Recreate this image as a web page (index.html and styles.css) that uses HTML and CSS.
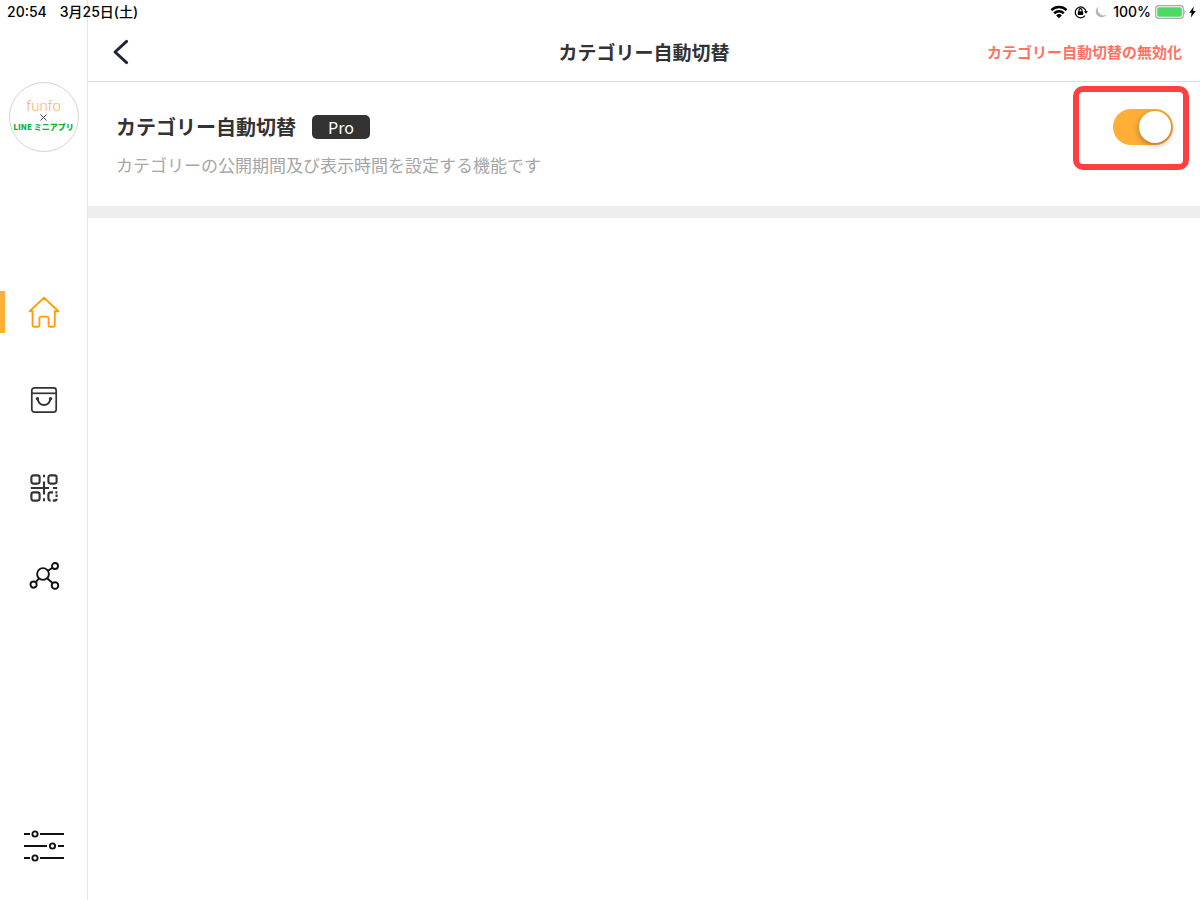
FILE: index.html
```html
<!DOCTYPE html>
<html lang="ja">
  <head>
    <meta charset="UTF-8" />
    <meta name="viewport" content="width=device-width, initial-scale=1.0" />
    <title>カテゴリー自動切替</title>
    <link rel="stylesheet" href="styles.css">
  </head>
  <body>
    <div class="status">
      <span class="time">20:54</span>
      <span class="date">3月25日(土)</span>
      <div class="status-right">
        <svg class="wifi" width="18" height="14" viewBox="0 0 18 14" fill="none" stroke="#000" stroke-width="2.4">
          <path d="M1.4 5.2a10.8 10.8 0 0 1 15.2 0" />
          <path d="M4.2 8.3a6.8 6.8 0 0 1 9.6 0" />
          <path d="M9 13.2 6.2 10.4a4 4 0 0 1 5.6 0z" fill="#000" stroke="none" />
        </svg>
        <svg class="lock" width="14" height="14" viewBox="0 0 14 14" fill="none" stroke="#000" stroke-width="1.2">
          <path d="M11 10.6a5.4 5.4 0 1 1 1-4" />
          <path d="M10 6.2h4l-2 2.6z" fill="#000" stroke="none" />
          <rect x="3.8" y="6.2" width="5.4" height="3.8" rx="0.5" fill="#000" stroke="none" />
          <path d="M5 6.5V5.2a1.5 1.5 0 0 1 3 0v1.3" />
        </svg>
        <svg class="moon" width="12" height="12" viewBox="0 0 12 12">
          <path d="M3.6 0.4A5.9 5.9 0 1 0 11.6 8.6 6 6 0 0 1 3.6 0.4z" fill="#b5b5b5" />
        </svg>
        <span>100%</span>
        <svg class="battery" width="31" height="14" viewBox="0 0 31 14">
          <rect x="0.7" y="0.7" width="27.6" height="12.6" rx="3.4" fill="#fff" stroke="#a8a8a8" stroke-width="1.2" />
          <rect x="2.2" y="2.2" width="24.6" height="9.6" rx="1.8" fill="#4cd964" />
          <path d="M29.3 5v4q1.3-.6 1.3-2t-1.3-2z" fill="#a8a8a8" />
        </svg>
        <svg class="bolt" width="7" height="12" viewBox="0 0 7 12">
          <path d="M4.8 0.6 0.2 6.8h2.4l-.7 4.8 4.9-6.6H4.1z" fill="#000" />
        </svg>
      </div>
    </div>

    <div class="app">
      <nav class="sidebar">
        <a class="logo" href="#" aria-label="funfo × LINE ミニアプリ">
          <span class="logo-funfo">funfo</span>
          <svg width="7" height="7" viewBox="0 0 7 7" stroke="#444" stroke-width="1"><path d="M0.5 0.5l6 6M6.5 0.5l-6 6" /></svg>
          <span class="logo-line">LINE ミニアプリ</span>
        </a>

        <div class="menu">
          <a class="item active" href="#" aria-label="ホーム">
            <svg width="32" height="32" viewBox="0 0 32 32" fill="none" stroke="#ff9f0f" stroke-width="1.9" stroke-linejoin="round" stroke-linecap="round">
              <path d="M16 1.8 1.6 15.2H4.6V29.6q0 1.2 1.2 1.2H10.2q1.2 0 1.2-1.2V22.4q0-1.8 1.8-1.8H18.8q1.8 0 1.8 1.8V29.6q0 1.2 1.2 1.2H25.6q1.2 0 1.2-1.2V15.2H30.4z" />
            </svg>
          </a>
          <a class="item" href="#" aria-label="注文">
            <svg width="28" height="28" viewBox="0 0 28 28" fill="none" stroke="#333" stroke-width="1.7">
              <rect x="1.8" y="1.8" width="24.4" height="24.4" rx="2.6" />
              <path d="M2 7.3H26" />
              <path d="M7.6 13q1.2 6 6.4 6t6.4-6" stroke-width="1.9" />
              <circle cx="7.5" cy="12.8" r="1.7" fill="#333" stroke="none" />
              <circle cx="20.5" cy="12.8" r="1.7" fill="#333" stroke="none" />
            </svg>
          </a>
          <a class="item" href="#" aria-label="QRコード">
            <svg width="28" height="28" viewBox="0 0 28 28" fill="none" stroke="#333" stroke-width="2.1">
              <rect x="1.4" y="1.4" width="8.2" height="8.2" rx="2" />
              <rect x="18.4" y="1.4" width="8.2" height="8.2" rx="2" />
              <rect x="1.4" y="18.4" width="8.2" height="8.2" rx="2" />
              <path d="M14 .8V3.2M14 7.4V20.4M14 24.2V27.2M.8 14H19M23 14H27.2" />
              <path d="M23 18.4H20.8q-2.4 0-2.4 2.4V24.2q0 2.4 2.2 2.4M25.4 18.4H27.4M26.6 20.6V23M22.8 26.6H24.4q2.2 0 2.2-1.8" />
            </svg>
          </a>
          <a class="item" href="#" aria-label="連携">
            <svg width="32" height="32" viewBox="0 0 32 32" fill="none" stroke="#111" stroke-width="1.9">
              <circle cx="15" cy="14" r="5.9" />
              <circle cx="27" cy="6" r="3" />
              <circle cx="5.6" cy="24.6" r="3.1" />
              <circle cx="27" cy="25.6" r="3.3" />
              <path d="M19.9 10.7 24.5 7.7M11 18.4 7.7 22.2M19.2 18.2 24.7 23.3" />
            </svg>
          </a>
        </div>

        <a class="item settings" href="#" aria-label="設定">
          <svg width="40" height="32" viewBox="0 0 40 32" fill="none" stroke="#111" stroke-width="1.9">
            <path d="M0 4H6M16 4H40M0 16H23M34 16H40M0 28H6M16 28H40" />
            <circle cx="11" cy="4" r="2.6" />
            <circle cx="28.5" cy="16" r="2.6" />
            <circle cx="11" cy="28" r="2.6" />
          </svg>
        </a>
      </nav>

      <main class="content">
        <header class="topbar">
          <button class="back" type="button" aria-label="戻る">
            <svg width="18" height="26" viewBox="0 0 18 26" fill="none" stroke="#25253a" stroke-width="3" stroke-linecap="round" stroke-linejoin="round"><path d="M14.6 2.4 3 13 14.6 23.6" /></svg>
          </button>
          <h1 class="title">カテゴリー自動切替</h1>
          <button class="disable" type="button">カテゴリー自動切替の無効化</button>
        </header>

        <section class="setting">
          <div class="setting-text">
            <h2 class="setting-name">
              <label for="auto">カテゴリー自動切替</label>
              <span class="badge">Pro</span>
            </h2>
            <p class="desc">カテゴリーの公開期間及び表示時間を設定する機能です</p>
          </div>
          <div class="highlight">
            <input class="switch" id="auto" type="checkbox" role="switch" checked>
          </div>
        </section>
      </main>
    </div>
  </body>
</html>
```
FILE: styles.css
```css
* {
  margin: 0;
  padding: 0;
  box-sizing: border-box;
}
body {
  background-color: #fff;
  color: #333;
  font-family: "Noto Sans CJK JP", sans-serif;
}
a {
  text-decoration: none;
}
button {
  border: none;
  background: none;
  font-family: inherit;
  cursor: pointer;
}
svg {
  display: block;
  flex: none;
}

/* status bar, lies over the sidebar and the header */
.status {
  position: absolute;
  top: 0;
  left: 0;
  right: 0;
  z-index: 1;
  display: flex;
  align-items: center;
  height: 24px;
  padding: 0 4px 0 7px;
  color: #000;
  font-family: Inter, "Noto Sans CJK JP", sans-serif;
  font-size: 14px;
  font-weight: 500;
  line-height: 24px;
}
.date {
  margin-left: 13px;
}
.status-right {
  display: flex;
  align-items: center;
  margin-left: auto;
}
.lock {
  margin: 0 7px 0 6px;
}
.moon {
  margin-right: 6px;
}
.battery {
  margin: 0 3px 0 4px;
}

.app {
  display: flex;
  min-height: 100vh;
}

/* sidebar */
.sidebar {
  display: flex;
  flex: none;
  flex-direction: column;
  align-items: center;
  width: 88px;
  padding: 82px 0 32px;
  border-right: 1px solid #e4e4e4;
}
.logo {
  display: flex;
  flex-direction: column;
  align-items: center;
  width: 70px;
  height: 70px;
  padding-top: 14px;
  border: 1px solid #d4d4d4;
  border-radius: 50%;
  white-space: nowrap;
}
.logo-funfo {
  color: #f5a83a;
  font-family: Lato, sans-serif;
  font-size: 15px;
  font-weight: 300;
  line-height: 17px;
}
.logo-line {
  color: #06b33b;
  font-size: 8px;
  font-weight: 900;
  line-height: 12px;
}
.menu {
  display: flex;
  flex-direction: column;
  gap: 46px;
  width: 100%;
  margin-top: 139px;
}
.item {
  display: flex;
  align-items: center;
  justify-content: center;
  height: 42px;
}
.menu .item {
  border-left: 5px solid transparent;
  padding-right: 4px;
}
.menu .active {
  border-left-color: #ffaf38;
}
.settings {
  height: 44px;
  margin-top: auto;
}

/* header */
.content {
  flex: 1;
  min-width: 0;
}
.topbar {
  display: grid;
  grid-template-columns: 1fr auto 1fr;
  align-items: center;
  height: 82px;
  padding: 22px 18px 0;
  border-bottom: 1px solid #dcdcdc;
}
.back {
  justify-self: start;
  padding-left: 6px;
}
.title {
  font-size: 19px;
  font-weight: 700;
  line-height: 28px;
}
.disable {
  justify-self: end;
  color: #ff7262;
  font-size: 15px;
  font-weight: 700;
  line-height: 24px;
}

/* setting row */
.setting {
  display: flex;
  align-items: flex-start;
  justify-content: space-between;
  padding: 4px 11px 28px 28px;
  border-bottom: 12px solid #eee;
}
.setting-text {
  padding-top: 26px;
}
.setting-name {
  display: flex;
  align-items: center;
  gap: 16px;
  font-size: 20px;
  font-weight: 700;
  line-height: 30px;
}
.badge {
  padding: 0 16px;
  border-radius: 5px;
  background-color: #333;
  color: #fff;
  font-size: 16px;
  font-weight: 400;
  line-height: 24px;
}
.desc {
  margin-top: 10px;
  color: #a6a6a6;
  font-size: 17px;
  line-height: 26px;
}
.highlight {
  display: flex;
  align-items: center;
  justify-content: flex-end;
  width: 116px;
  height: 84px;
  padding: 0 10px 2px 0;
  border: 6px solid #ff4040;
  border-radius: 10px;
}
.switch {
  appearance: none;
  width: 60px;
  height: 36px;
  padding: 2px;
  border-radius: 18px;
  background-color: #ccc;
  cursor: pointer;
}
.switch::before {
  content: "";
  display: block;
  width: 32px;
  height: 32px;
  border-radius: 50%;
  background-color: #fff;
  box-shadow: 0 2px 6px rgba(0, 0, 0, 0.35);
}
.switch:checked {
  background-color: #ffaf38;
}
.switch:checked::before {
  margin-left: auto;
}
```
